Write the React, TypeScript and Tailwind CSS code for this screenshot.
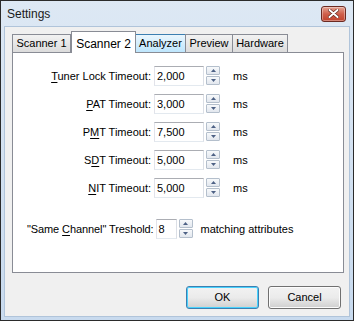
import React from "react";

const font = { fontFamily: '"Liberation Sans", Arial, sans-serif' };

// small spin button pair next to a text box
function Spinner() {
  return (
    <div className="flex h-[20px] w-[14px] flex-col gap-[1px]">
      <div className="flex h-[9px] items-center justify-center rounded-[1px] border border-[#b4bfcc] bg-gradient-to-b from-[#f7f9fb] to-[#e2e7ee]">
        <svg width="5" height="3" viewBox="0 0 5 3">
          <path d="M0 3 L2.5 0 L5 3 Z" fill="#4d6185" />
        </svg>
      </div>
      <div className="flex h-[9px] items-center justify-center rounded-[1px] border border-[#b4bfcc] bg-gradient-to-b from-[#f7f9fb] to-[#e2e7ee]">
        <svg width="5" height="3" viewBox="0 0 5 3">
          <path d="M0 0 L2.5 3 L5 0 Z" fill="#4d6185" />
        </svg>
      </div>
    </div>
  );
}

function Mn({ c }: { c: string }) {
  return <span className="underline underline-offset-[2px]">{c}</span>;
}

const rows: { pre: string; key: string; post: string; value: string }[] = [
  { pre: "", key: "T", post: "uner Lock Timeout:", value: "2,000" },
  { pre: "", key: "P", post: "AT Timeout:", value: "3,000" },
  { pre: "P", key: "M", post: "T Timeout:", value: "7,500" },
  { pre: "S", key: "D", post: "T Timeout:", value: "5,000" },
  { pre: "", key: "N", post: "IT Timeout:", value: "5,000" },
];

const tabs = [
  { label: "Scanner 1", w: "w-[59px]" },
  { label: "Scanner 2", w: "w-[65px]", active: true },
  { label: "Analyzer", w: "w-[51px]", hover: true },
  { label: "Preview", w: "w-[48px]" },
  { label: "Hardware", w: "w-[56px]" },
];

const box =
  "flex h-[20px] items-center border border-[#abadb3] border-b-[#e3e9ef] border-l-[#e2e3ea] border-r-[#dbdfe6] bg-white pl-[2px]";

export default function App() {
  return (
    <div
      className="flex h-[321px] w-[354px] flex-col border border-[#2b2b2b] bg-gradient-to-b from-[#dde8f4] to-[#c8daee] text-[11px] text-black"
      style={font}
    >
      {/* Title bar */}
      <div className="flex h-[25px] items-center justify-between pl-[6px] pr-[7px]">
        <span className="text-[12px] text-[#1a1a1a]">Settings</span>
        <div className="flex h-[16px] w-[25px] items-center justify-center rounded-[3px] border border-[#6b2a22] bg-gradient-to-b from-[#e3a393] via-[#cf5f4b] to-[#c0422c] shadow-[inset_0_0_0_1px_rgba(255,255,255,0.35)]">
          <svg width="11" height="9" viewBox="0 0 11 9">
            <path d="M1.5 1 L9.5 8 M9.5 1 L1.5 8" stroke="#5a2018" strokeWidth="3.2" strokeLinecap="round" />
            <path d="M1.5 1 L9.5 8 M9.5 1 L1.5 8" stroke="#ffffff" strokeWidth="2" strokeLinecap="round" />
          </svg>
        </div>
      </div>

      {/* Client area */}
      <div className="mx-[3px] mb-[3px] flex flex-1 flex-col border border-[#b0c4da] bg-[#f0f0f0] px-[7px] pt-[5px]">
        {/* Tabs */}
        <div className="flex h-[20px] items-end pl-[1px]">
          {tabs.map((t) =>
            t.active ? (
              <div
                key={t.label}
                className={`relative z-10 -mb-[1px] flex h-[22px] ${t.w} items-start justify-center border border-b-0 border-[#898c95] bg-white pt-[3px] text-[12px]`}
              >
                {t.label}
              </div>
            ) : (
              <div
                key={t.label}
                className={`-ml-[1px] flex h-[18px] ${t.w} items-center justify-center border border-b-0 ${
                  t.hover
                    ? "border-[#3c7fb1] bg-gradient-to-b from-[#eaf6fd] to-[#bee6fd]"
                    : "border-[#898c95] bg-gradient-to-b from-[#f2f2f2] to-[#dcdcdc]"
                }`}
              >
                {t.label}
              </div>
            )
          )}
        </div>

        {/* Tab page */}
        <div className="flex h-[221px] w-[332px] flex-col border border-[#898c95] bg-white pt-[13px]">
          <div className="flex flex-col gap-[8px]">
            {rows.map((r) => (
              <div key={r.value + r.post} className="flex h-[20px] items-center">
                <div className="w-[138px] whitespace-nowrap text-right">
                  {r.pre}
                  <Mn c={r.key} />
                  {r.post}
                </div>
                <div className={`ml-[3px] w-[50px] ${box}`}>{r.value}</div>
                <div className="ml-[2px]">
                  <Spinner />
                </div>
                <span className="ml-[13px]">ms</span>
              </div>
            ))}
          </div>

          <div className="mt-[21px] flex h-[20px] items-center pl-[14px]">
            <span className="whitespace-nowrap tracking-[-0.1px]">
              "Same <Mn c="C" />hannel" Treshold:
            </span>
            <div className={`ml-[2px] w-[21px] ${box}`}>8</div>
            <div className="ml-[2px]">
              <Spinner />
            </div>
            <span className="ml-[8px]">matching attributes</span>
          </div>
        </div>

        {/* Buttons */}
        <div className="mt-[13px] flex justify-end gap-[9px] pr-[1px]">
          <button className="flex h-[23px] w-[73px] items-center justify-center rounded-[3px] border border-[#3c7fb1] bg-gradient-to-b from-[#f2f2f2] via-[#ebebeb] to-[#cfcfcf] shadow-[inset_0_0_0_1px_#48d2fd]">
            OK
          </button>
          <button className="flex h-[23px] w-[73px] items-center justify-center rounded-[3px] border border-[#707070] bg-gradient-to-b from-[#f2f2f2] via-[#ebebeb] to-[#cfcfcf] shadow-[inset_0_0_0_1px_#fcfcfc]">
            Cancel
          </button>
        </div>
      </div>
    </div>
  );
}
